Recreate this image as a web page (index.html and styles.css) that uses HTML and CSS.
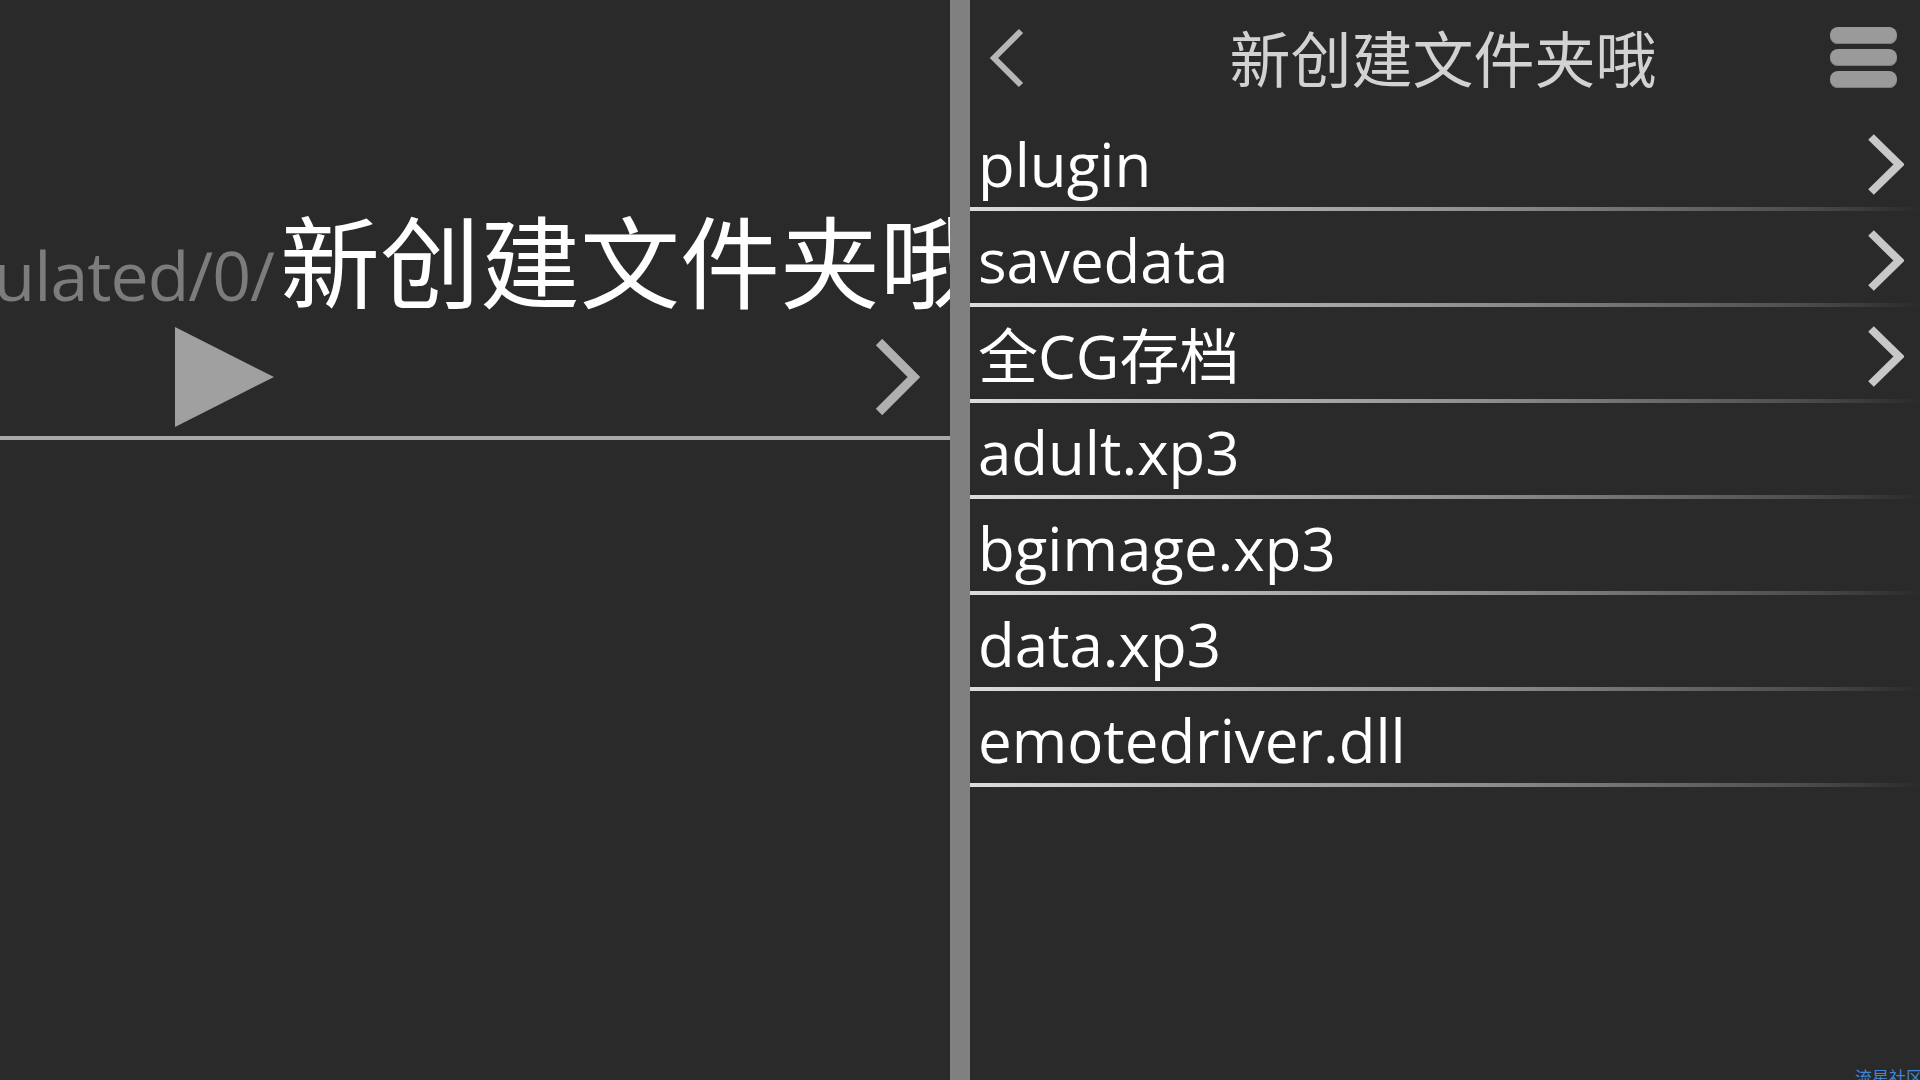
FILE: index.html
```html
<!DOCTYPE html>
<html>
<head>
  <title>新创建文件夹哦</title>
  <link rel="stylesheet" href="styles.css">
</head>
<body>

  <div class="screen">
    <div class="pane-left">
      <div class="path">
        <div class="path-text"><span class="path-parent">/storage/emulated/0/</span><span class="path-name">新创建文件夹哦</span></div>
      </div>
      <div class="controls">
        <span class="play"></span>
        <svg class="next" width="45" height="76" viewBox="0 0 45 76">
          <polyline points="4,3 39,38 4,73" fill="none" stroke="#b0b0b0" stroke-width="9"/>
        </svg>
      </div>
      <div class="rule"></div>
    </div>

    <div class="divider"></div>

    <div class="pane-right">
      <div class="header">
        <svg class="back" width="35" height="60" viewBox="0 0 35 60">
          <polyline points="32,3 5,30 32,57" fill="none" stroke="#b6b6b6" stroke-width="6"/>
        </svg>
        <div class="title">新创建文件夹哦</div>
        <div class="menu"><span></span><span></span><span></span></div>
      </div>

      <ul class="files">
        <li class="folder">plugin
          <svg width="37" height="61" viewBox="0 0 37 61"><polyline points="4,3 32,30.5 4,58" fill="none" stroke="#c8c8c8" stroke-width="8"/></svg>
        </li>
        <li class="folder">savedata
          <svg width="37" height="61" viewBox="0 0 37 61"><polyline points="4,3 32,30.5 4,58" fill="none" stroke="#c8c8c8" stroke-width="8"/></svg>
        </li>
        <li class="folder">全CG存档
          <svg width="37" height="61" viewBox="0 0 37 61"><polyline points="4,3 32,30.5 4,58" fill="none" stroke="#c8c8c8" stroke-width="8"/></svg>
        </li>
        <li>adult.xp3</li>
        <li>bgimage.xp3</li>
        <li>data.xp3</li>
        <li>emotedriver.dll</li>
      </ul>
    </div>
  </div>

  <div class="watermark">流星社区</div>

</body>
</html>
```

FILE: styles.css
```css
body {
  margin: 0;
  background: #2a2a2a;
  overflow: hidden;
  font-family: "Open Sans", "Noto Sans CJK SC", sans-serif;
}

.screen {
  display: flex;
  height: 100vh;
}

/* left pane: current path + playback */

.pane-left {
  width: 950px;
  flex: none;
  overflow: hidden;
}

.path {
  height: 318px;
  padding-top: 198px;
  box-sizing: border-box;
  display: flex;
  justify-content: flex-end;
  overflow: hidden;
}

.path-text {
  flex: none;
  white-space: nowrap;
  margin-right: -30px;
  font-family: "Noto Sans CJK SC", sans-serif;
  font-size: 100px;
  line-height: 120px;
  color: #ffffff;
}

.path-parent {
  font-family: "Open Sans", sans-serif;
  font-size: 68px;
  letter-spacing: -1px;
  margin-right: 6px;
  color: #7c7c7c;
}

.controls {
  height: 118px;
  display: flex;
  align-items: center;
  padding: 0 30px 0 175px;
}

.play {
  width: 0;
  height: 0;
  border-top: 50px solid transparent;
  border-bottom: 50px solid transparent;
  border-left: 99px solid #a0a0a0;
}

.next {
  margin-left: auto;
}

.rule {
  height: 4px;
  background: #a8a8a8;
}

.divider {
  width: 20px;
  flex: none;
  background: #808080;
}

/* right pane: file list */

.pane-right {
  flex: 1;
}

.header {
  height: 115px;
  display: grid;
  grid-template-columns: 1fr auto 1fr;
  align-items: center;
  padding: 0 23px 0 19px;
}

.title {
  font-family: "Noto Sans CJK SC", sans-serif;
  font-size: 61px;
  line-height: 61px;
  color: #d2d2d2;
  margin-bottom: 3px;
}

.menu {
  justify-self: end;
  display: flex;
  flex-direction: column;
  gap: 5px;
}

.menu span {
  width: 67px;
  height: 17px;
  border-radius: 8px;
  background: #9a9a9a;
  box-shadow: inset 0 -1px 0 #7c7c7c;
}

.files {
  list-style: none;
  margin: 0;
  padding: 0;
}

.files li {
  height: 96px;
  box-sizing: border-box;
  padding: 7px 16px 4px 8px;
  display: flex;
  align-items: center;
  justify-content: space-between;
  font-size: 60px;
  line-height: 85px;
  color: #ffffff;
  background: linear-gradient(to right, #dcdcdc, #8c8c8c 55%, #4c4c4c 88%, rgba(42, 42, 42, 0)) left bottom / 100% 4px no-repeat;
}

.watermark {
  position: absolute;
  right: -3px;
  bottom: -9px;
  font-family: "Noto Sans CJK SC", sans-serif;
  font-size: 17px;
  color: #3f86d4;
}
```
